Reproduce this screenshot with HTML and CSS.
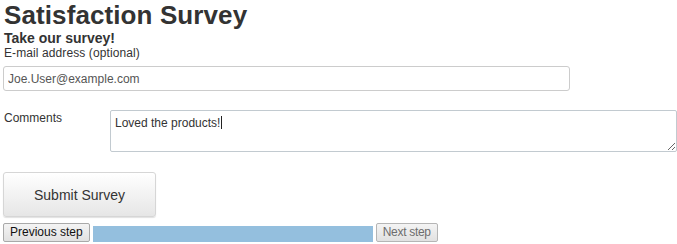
FILE: index.html
```html
<!DOCTYPE html>
<html lang="en">
<head>
<meta charset="utf-8">
<title>Satisfaction Survey</title>
<link rel="stylesheet" href="styles.css">
</head>
<body>
<main class="survey">
  <h1 class="survey-title">Satisfaction Survey</h1>
  <h2 class="survey-subtitle">Take our survey!</h2>
  <form class="survey-form">
    <label class="field-label" for="email">E-mail address (optional)</label>
    <input class="text-input" id="email" type="text" value="Joe.User@example.com">
    <div class="comments-row">
      <label class="comments-label" for="comments">Comments</label>
      <div class="textarea-wrap">
        <textarea class="text-area" id="comments">Loved the products!</textarea>
        <span class="caret"></span>
      </div>
    </div>
    <button class="submit-btn" type="button">Submit Survey</button>
    <div class="wizard-nav">
      <button class="step-btn" type="button">Previous step</button>
      <div class="progress-bar"></div>
      <button class="step-btn step-btn-disabled" type="button" disabled>Next step</button>
    </div>
  </form>
</main>
</body>
</html>
```
FILE: styles.css
```css
html, body {
  margin: 0;
  padding: 0;
  background: #ffffff;
}

body {
  font-family: "Liberation Sans", Arial, sans-serif;
  color: #333333;
}

.survey {
  padding: 1px 3px 0 3px;
}

.survey-title {
  margin: 0;
  font-size: 26px;
  line-height: 29px;
  font-weight: bold;
  color: #333333;
  padding-left: 1px;
  letter-spacing: 0.1px;
}

.survey-subtitle {
  margin: 0;
  font-size: 14px;
  line-height: 16px;
  font-weight: bold;
  color: #333333;
  padding-left: 1px;
}

.survey-form {
  display: flex;
  flex-direction: column;
  align-items: flex-start;
}

.field-label {
  font-size: 12px;
  line-height: 15px;
  padding-left: 1px;
  color: #333333;
  letter-spacing: 0.1px;
}

.text-input {
  box-sizing: border-box;
  margin: 5px 0 0 0;
  width: 567px;
  height: 25px;
  padding: 0 4px;
  border: 1px solid #cccccc;
  border-radius: 3px;
  font-family: "Liberation Sans", Arial, sans-serif;
  font-size: 12px;
  color: #555555;
  background: #ffffff;
  outline: none;
}

.comments-row {
  display: flex;
  margin-top: 19px;
  width: 100%;
}

.comments-label {
  width: 107px;
  flex: none;
  font-size: 12px;
  line-height: 15px;
  padding-top: 1px;
  padding-left: 1px;
  box-sizing: border-box;
  color: #333333;
}

.textarea-wrap {
  position: relative;
  flex: none;
}

.text-area {
  display: block;
  box-sizing: border-box;
  margin: 0;
  width: 567px;
  height: 42px;
  padding: 5px 4px;
  border: 1px solid #c2cad0;
  border-radius: 2px;
  font-family: "Liberation Sans", Arial, sans-serif;
  font-size: 12px;
  line-height: 14px;
  color: #333333;
  background: #ffffff;
  outline: none;
  resize: both;
}

.caret {
  position: absolute;
  left: 111px;
  top: 6px;
  width: 1px;
  height: 13px;
  background: #222222;
}

.submit-btn {
  box-sizing: border-box;
  margin-top: 20px;
  width: 153px;
  height: 45px;
  border: 1px solid #d6d6d6;
  border-radius: 3px;
  background: linear-gradient(#ffffff, #e6e6e6);
  box-shadow: 0 1px 1px rgba(0, 0, 0, 0.12);
  font-family: "Liberation Sans", Arial, sans-serif;
  font-size: 14px;
  color: #333333;
  padding: 0;
  cursor: pointer;
}

.wizard-nav {
  display: flex;
  align-items: flex-end;
  margin-top: 6px;
}

.step-btn {
  box-sizing: border-box;
  height: 19px;
  padding: 0 6px;
  border: 1px solid #a9a9a9;
  border-radius: 2px;
  background: linear-gradient(#f4f4f4, #e1e1e1);
  font-family: "Liberation Sans", Arial, sans-serif;
  font-size: 12px;
  line-height: 15px;
  color: #111111;
}

.step-btn-disabled {
  color: #6d6d6d;
  border-color: #b5b5b5;
  letter-spacing: -0.3px;
}

.progress-bar {
  width: 280px;
  height: 16px;
  margin: 0 3px 0 3px;
  background: #94bfde;
}
```
